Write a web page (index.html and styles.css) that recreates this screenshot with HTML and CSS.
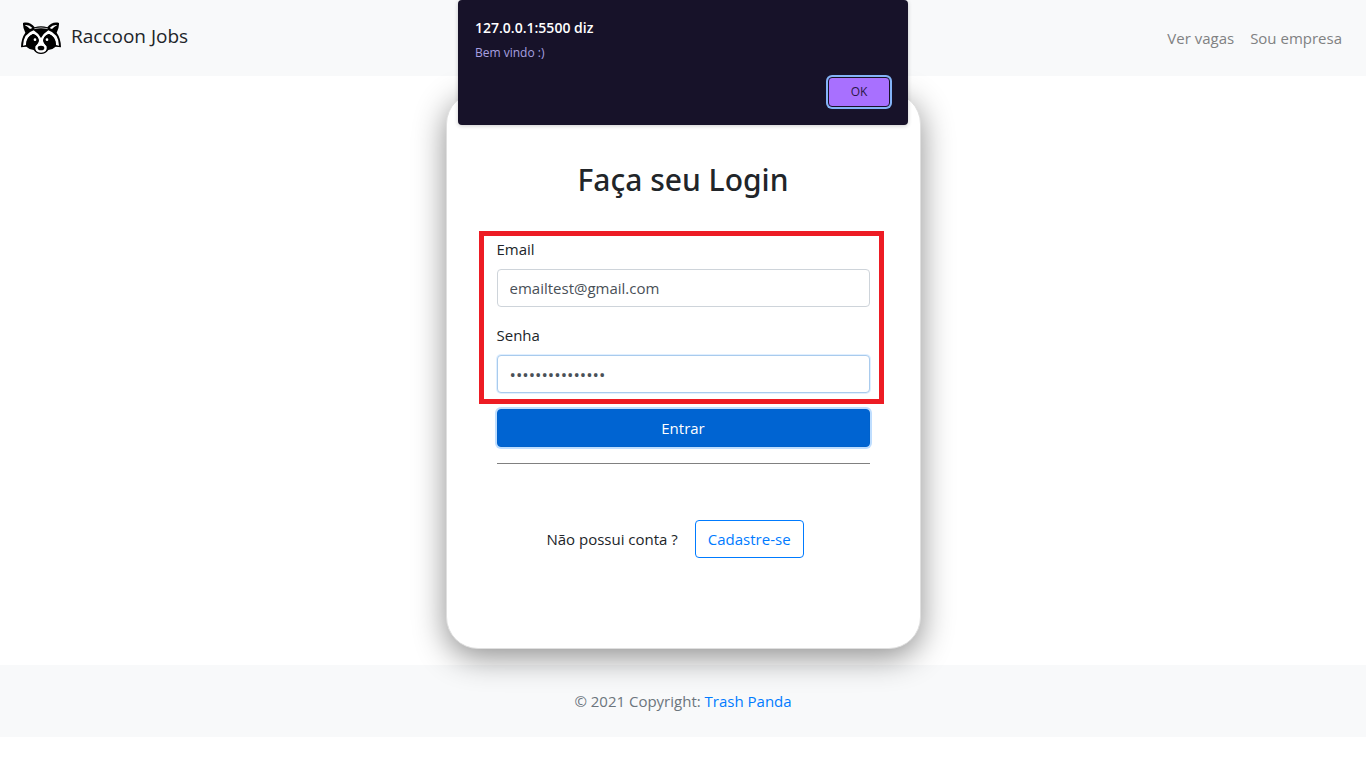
FILE: index.html
```html
<!DOCTYPE html>
<html lang="pt-BR">
<head>
<meta charset="utf-8">
<meta name="viewport" content="width=device-width, initial-scale=1">
<title>Raccoon Jobs</title>
<link rel="stylesheet" href="styles.css">
</head>
<body>
<header class="navbar">
  <a class="brand" href="#">
    <svg class="brand-logo" viewBox="0 0 120 96" aria-hidden="true">
      <path d="M6 3C18-1 32 3 41 16Q60 10 79 16C88 3 102-1 114 3Q115 18 107 32Q120 50 120 76L104 74Q96 82 82 84Q74 96 60 96Q46 96 38 84Q24 82 16 74L0 76Q0 50 13 32Q5 18 6 3Z" fill="#000"/>
      <path d="M11 9Q25 7 34 18L27 21Q22 15 11 9ZM109 9Q95 7 86 18L93 21Q98 15 109 9Z" fill="#fff"/>
      <path d="M40 20Q60 15 80 20" fill="none" stroke="#fff" stroke-width="2"/>
      <path d="M6 71Q7 35 38 25Q52 34 60 48Q68 34 82 25Q113 35 114 71L105 69Q104 44 84 36Q70 40 67 54Q68 64 77 73Q80 92 60 92Q40 92 43 73Q52 64 53 54Q50 40 36 36Q16 44 15 69Z" fill="#fff"/>
      <path d="M36 36Q51 40 54 56Q51 68 36 77Q20 78 15 69Q16 44 36 36ZM84 36Q69 40 66 56Q69 68 84 77Q100 78 105 69Q104 44 84 36Z" fill="#000"/>
      <ellipse cx="60" cy="78" rx="10" ry="7" fill="#000"/>
      <circle cx="42" cy="53" r="4" fill="#fff"/>
      <circle cx="78" cy="53" r="4" fill="#fff"/>
    </svg>
    <span class="brand-name">Raccoon Jobs</span>
  </a>
  <nav class="nav-links">
    <a href="#">Ver vagas</a>
    <a href="#">Sou empresa</a>
  </nav>
</header>

<main class="content">
  <section class="card">
    <h1 class="card-title">Faça seu Login</h1>
    <form class="login-form">
      <div class="fields">
        <div class="field">
          <label for="email">Email</label>
          <input class="control" id="email" type="email" value="emailtest@gmail.com">
        </div>
        <div class="field">
          <label for="senha">Senha</label>
          <input class="control control-active" id="senha" type="password" value="senhadeteste123">
        </div>
        <div class="highlight"></div>
      </div>
      <button class="btn btn-primary" type="button">Entrar</button>
    </form>
    <hr class="divider">
    <div class="signup">
      <span>Não possui conta ?</span>
      <button class="btn btn-outline" type="button">Cadastre-se</button>
    </div>
  </section>
</main>

<footer class="footer">© 2021 Copyright: <a href="#">Trash Panda</a></footer>

<div class="alert" role="alertdialog" aria-labelledby="alert-title" aria-describedby="alert-text">
  <h2 class="alert-title" id="alert-title">127.0.0.1:5500 diz</h2>
  <p class="alert-text" id="alert-text">Bem vindo :)</p>
  <button class="alert-ok" type="button">OK</button>
</div>
</body>
</html>
```
FILE: styles.css
```css
*,
*::before,
*::after {
  box-sizing: border-box;
}

body {
  margin: 0;
  background: #fff;
  color: #212529;
  font-family: "Open Sans", "Noto Sans", sans-serif;
  font-size: 15px;
  line-height: 24px;
}

a {
  color: #007bff;
  text-decoration: none;
}

button,
input {
  font: inherit;
}

.navbar {
  display: flex;
  align-items: center;
  justify-content: space-between;
  min-height: 76px;
  padding: 0 24px 0 21px;
  background: #f8f9fa;
}

.brand {
  display: flex;
  align-items: center;
  gap: 10px;
  color: #212529;
  font-size: 19px;
}

.brand-name {
  padding-bottom: 4px;
}

.brand-logo {
  width: 40px;
  height: 32px;
}

.nav-links {
  display: flex;
  gap: 16px;
}

.nav-links a {
  color: #808182;
}

.content {
  padding: 16px;
}

.card {
  position: relative;
  max-width: 475px;
  margin: 0 auto;
  padding: 68px 50px 90px;
  border: 1px solid #dfdfdf;
  border-radius: 32px;
  background: #fff;
  box-shadow: 0 8px 32px rgba(0, 0, 0, 0.45);
}

.card-title {
  margin: 0 0 38px;
  font-family: "Noto Sans", "Open Sans", sans-serif;
  font-size: 30px;
  font-weight: 500;
  line-height: 38px;
  text-align: center;
}

.fields {
  position: relative;
  display: grid;
  gap: 16px;
  margin-bottom: 16px;
}

.field {
  display: grid;
  gap: 8px;
}

.control {
  width: 100%;
  height: 38px;
  padding: 6px 12px;
  border: 1px solid #ced4da;
  border-radius: 4px;
  background: #fff;
  color: #495057;
  outline: none;
}

.control-active {
  border-color: #a9cbed;
  box-shadow: 0 0 0 1px #e0efff;
  font-size: 17px;
}

.highlight {
  position: absolute;
  inset: -6px -14px -11px -18px;
  border: 5px solid #ed1c24;
  pointer-events: none;
}

.btn {
  height: 38px;
  padding: 0 12px;
  border: 1px solid #007bff;
  border-radius: 4px;
  cursor: pointer;
}

.btn-primary {
  display: block;
  width: 100%;
  border-color: #0062cc;
  background: #0064d2;
  color: #fff;
  box-shadow: 0 0 0 2px #bfdeff;
}

.btn-outline {
  background: transparent;
  color: #007bff;
}

.divider {
  margin: 16px 0 56px;
  border: 0;
  border-top: 1px solid #808080;
}

.signup {
  display: flex;
  align-items: center;
  justify-content: center;
  gap: 17px;
  padding-right: 16px;
}

.footer {
  padding: 24px;
  background: #f8f9fa;
  color: #6c757d;
  text-align: center;
}

.alert {
  position: absolute;
  top: 0;
  left: 50%;
  display: flex;
  flex-direction: column;
  width: 450px;
  max-width: 100%;
  padding: 16px 18px 18px 17px;
  border-radius: 4px;
  background: #171229;
  box-shadow: 0 1px 4px rgba(0, 0, 0, 0.2);
  transform: translateX(-50%);
}

.alert-title {
  margin: 0;
  color: #fff;
  font-size: 14px;
  font-weight: 600;
  line-height: 24px;
}

.alert-text {
  margin: 4px 0 15px;
  color: #a8a0e0;
  font-size: 12px;
  line-height: 18px;
}

.alert-ok {
  align-self: flex-end;
  width: 62px;
  height: 30px;
  border: 1px solid #171229;
  border-radius: 4px;
  background: #a870ff;
  color: #2a1848;
  font-size: 12px;
  box-shadow: 0 0 0 2px #84b4f8;
}
```
